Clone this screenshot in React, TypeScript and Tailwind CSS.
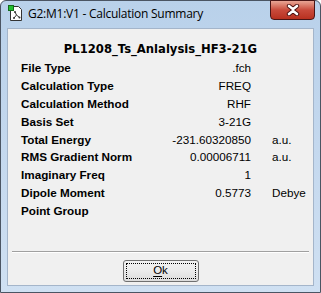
import React from 'react';

const rows: { label: string; value: string; unit?: string }[] = [
  { label: 'File Type', value: '.fch' },
  { label: 'Calculation Type', value: 'FREQ' },
  { label: 'Calculation Method', value: 'RHF' },
  { label: 'Basis Set', value: '3-21G' },
  { label: 'Total Energy', value: '-231.60320850', unit: 'a.u.' },
  { label: 'RMS Gradient Norm', value: '0.00006711', unit: 'a.u.' },
  { label: 'Imaginary Freq', value: '1' },
  { label: 'Dipole Moment', value: '0.5773', unit: 'Debye' },
  { label: 'Point Group', value: '' },
];

const AppIcon = () => (
  <svg width="16" height="17" viewBox="0 0 16 17">
    <path d="M2.5 1.5h8l3 3v11h-11z" fill="#fff" stroke="#333" />
    <rect x="0.5" y="0.5" width="5" height="5" fill="#22c030" stroke="#136b1c" />
    <path d="M7 7l1.5 3M8.5 10l-2.5 3M8.5 10l3 2.5" stroke="#333" strokeWidth="1" fill="none" />
    <circle cx="7" cy="7" r="1" fill="#333" />
    <circle cx="6" cy="13" r="1" fill="#333" />
    <circle cx="11.5" cy="12.5" r="1" fill="#333" />
  </svg>
);

const CloseX = () => (
  <svg width="14" height="12" viewBox="0 0 14 12">
    <path
      d="M3 2l4 3.2L11 2M3 10l4-3.2L11 10"
      stroke="#4a1010"
      strokeWidth="4.4"
      strokeLinecap="round"
      fill="none"
    />
    <path
      d="M3 2l4 3.2L11 2M3 10l4-3.2L11 10"
      stroke="#fff"
      strokeWidth="2.6"
      strokeLinecap="round"
      fill="none"
    />
  </svg>
);

export default function App() {
  return (
    <div className="w-[321px] h-[293px] bg-white">
      <div className="w-full h-full flex flex-col rounded-t-[6px] border border-[#4b5563] bg-gradient-to-b from-[#b9d1ea] via-[#c4d8ee] to-[#cfe0f2] font-['Liberation_Sans',Arial,sans-serif]">
        {/* Title bar */}
        <div className="h-[27px] flex items-start relative">
          <div className="mt-[4px] ml-[7px]">
            <AppIcon />
          </div>
          <span className="mt-[5px] ml-[4px] text-[12px] leading-[16px] text-black font-['Open_Sans',sans-serif] tracking-[-0.25px]">
            G2:M1:V1 - Calculation Summary
          </span>
          <div className="absolute -top-px right-[5px] w-[45px] h-[20px] rounded-b-[4px] border border-[#4a1515] bg-gradient-to-b from-[#e8a595] via-[#c94a3b] to-[#b8301f] flex items-center justify-center">
            <CloseX />
          </div>
        </div>

        {/* Client area */}
        <div className="flex-1 mx-[6px] mb-[6px] border border-[#a4b5ca] bg-[#f0f0f0] flex flex-col">
          <div className="pt-[12px] text-center text-[11.6px] font-bold leading-[16px] text-black font-['DejaVu_Sans',sans-serif]">
            PL1208_Ts_Anlalysis_HF3-21G
          </div>
          <div className="mt-[2px] flex flex-col pl-[13px]">
            {rows.map((r) => (
              <div key={r.label} className="h-[17.9px] flex items-center text-[11.7px] leading-[14px] text-black">
                <span className="w-[140px] font-bold">{r.label}</span>
                <span className="w-[90px] text-right">{r.value}</span>
                <span className="ml-[21px]">{r.unit}</span>
              </div>
            ))}
          </div>
          <div className="flex-1" />
          <div className="mx-[4px] border-t border-[#a0a0a0] border-b-white border-b" />
          <div className="flex justify-center pt-[7px] pb-[3px]">
            <button className="w-[76px] h-[22px] rounded-[3px] border border-[#707070] bg-gradient-to-b from-[#f2f2f2] via-[#ebebeb] to-[#dcdcdc] p-[2px]">
              <div className="w-full h-full border border-dotted border-black flex items-center justify-center text-[11.5px] text-black">
                <span className="underline underline-offset-2">O</span>k
              </div>
            </button>
          </div>
        </div>
      </div>
    </div>
  );
}
